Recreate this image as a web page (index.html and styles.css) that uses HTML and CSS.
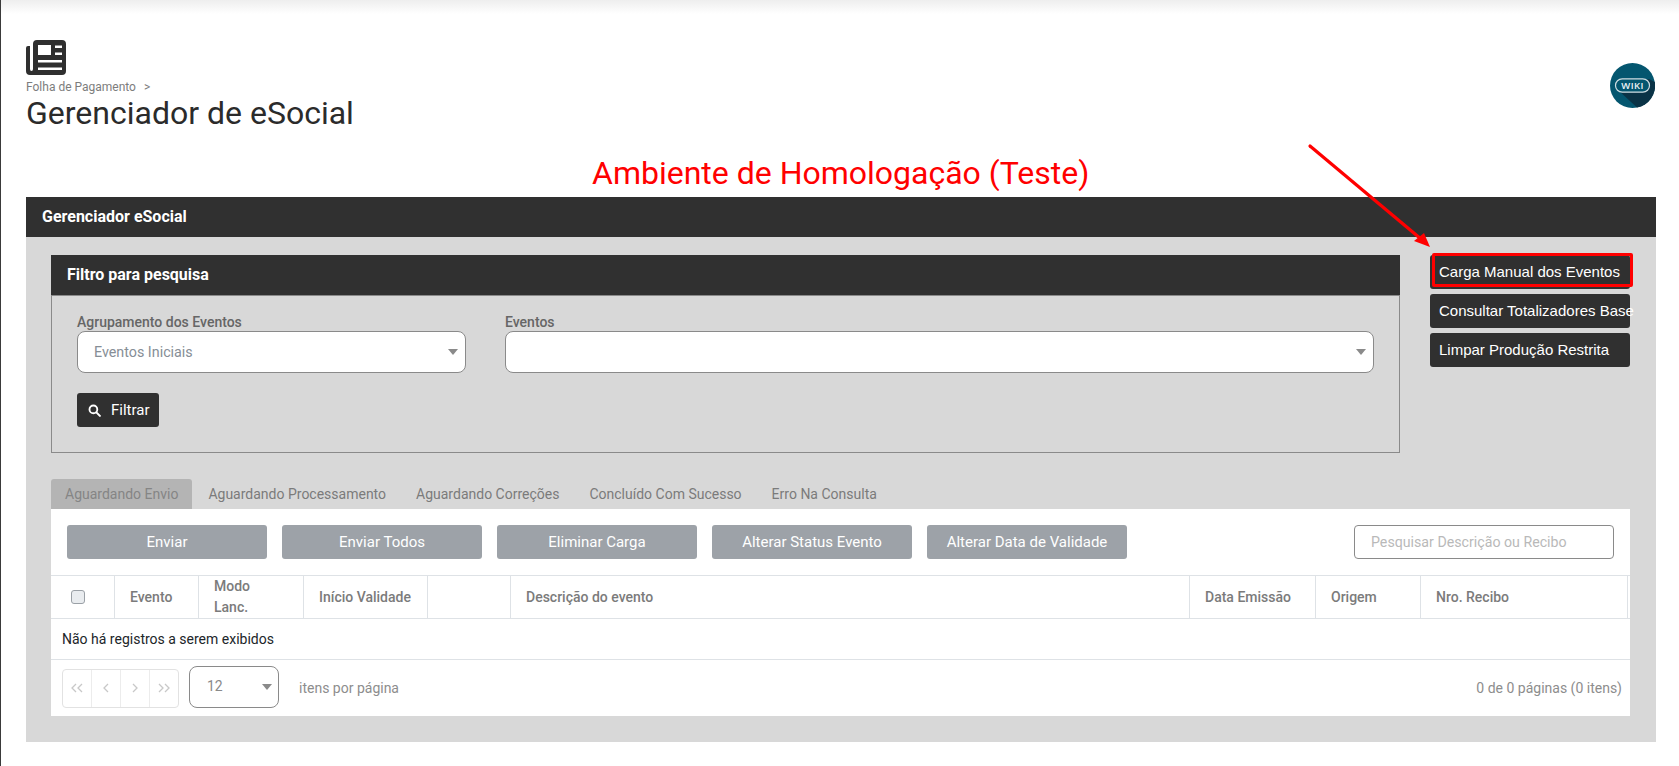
FILE: index.html
```html
<!DOCTYPE html>
<html lang="pt-BR">
<head>
<meta charset="utf-8">
<title>Gerenciador de eSocial</title>
<link rel="stylesheet" href="styles.css">
</head>
<body>
<div class="page">
  <div class="topshade"></div>
  <header class="pagehead">
    <div class="pagehead-left">
      <svg class="news" viewBox="0 0 40 35" width="40" height="35" aria-hidden="true">
        <path fill-rule="evenodd" fill="#2f2f2f" d="M11 0H36Q40 0 40 4V31Q40 35 36 35H4Q0 35 0 31V8Q0 6 2 6H4V29Q4 31 5.500 31Q7 31 7 29V4Q7 0 11 0ZM12 5V15H25V5ZM29 5.500V8H36V5.500ZM29 12.500V15H36V12.500ZM12 20V22.500H36V20ZM12 27.500V30H36V27.500Z"/>
      </svg>
      <div class="crumb">Folha de Pagamento <span class="crumb-sep">&gt;</span></div>
      <h1 class="title">Gerenciador de eSocial</h1>
    </div>
    <svg class="wiki" viewBox="0 0 45 45" width="45" height="45" aria-hidden="true">
      <circle cx="22.500" cy="22.500" r="22.500" fill="#04566f"/>
      <path d="M8 27L27 44.600A22.500 22.500 0 0 0 44.900 19L39 16Z" fill="#0a3346"/>
      <rect x="5.500" y="15.800" width="34" height="13.400" rx="6.700" fill="#04566f" stroke="#cfdde2" stroke-width="1.200"/>
      <text x="22.500" y="26" text-anchor="middle" class="wiki-text">WIKI</text>
    </svg>
  </header>
  <div class="notice">Ambiente de Homologação (Teste)</div>

  <section class="panel">
    <div class="panel-head">Gerenciador eSocial</div>
    <div class="panel-body">
      <div class="toprow">
        <div class="filter">
          <div class="filter-head">Filtro para pesquisa</div>
          <div class="filter-body">
            <div class="fields">
              <div class="field field-a">
                <label class="label">Agrupamento dos Eventos</label>
                <div class="select"><span>Eventos Iniciais</span><i class="caret"></i></div>
              </div>
              <div class="field field-b">
                <label class="label">Eventos</label>
                <div class="select"><span></span><i class="caret"></i></div>
              </div>
            </div>
            <button class="btn-filter">
              <svg viewBox="0 0 14 14" width="13" height="13" aria-hidden="true"><circle cx="5.800" cy="5.800" r="4.200" fill="none" stroke="#fff" stroke-width="2"/><path d="M9 9L12.800 12.800" stroke="#fff" stroke-width="2.200" stroke-linecap="round"/></svg>
              Filtrar
            </button>
          </div>
        </div>
        <div class="side">
          <button class="btn-side">Carga Manual dos Eventos</button>
          <button class="btn-side">Consultar Totalizadores Base</button>
          <button class="btn-side">Limpar Produção Restrita</button>
        </div>
      </div>

      <nav class="tabs">
        <span class="tab tab-on">Aguardando Envio</span>
        <span class="tab">Aguardando Processamento</span>
        <span class="tab">Aguardando Correções</span>
        <span class="tab">Concluído Com Sucesso</span>
        <span class="tab">Erro Na Consulta</span>
      </nav>

      <div class="grid">
        <div class="toolbar">
          <button class="btn-grey">Enviar</button>
          <button class="btn-grey">Enviar Todos</button>
          <button class="btn-grey">Eliminar Carga</button>
          <button class="btn-grey">Alterar Status Evento</button>
          <button class="btn-grey">Alterar Data de Validade</button>
          <div class="search">Pesquisar Descrição ou Recibo</div>
        </div>
        <div class="thead">
          <div class="th th-check"><span class="check"></span></div>
          <div class="th">Evento</div>
          <div class="th th-two">Modo Lanc.</div>
          <div class="th">Início Validade</div>
          <div class="th"></div>
          <div class="th">Descrição do evento</div>
          <div class="th">Data Emissão</div>
          <div class="th">Origem</div>
          <div class="th">Nro. Recibo</div>
        </div>
        <div class="empty">Não há registros a serem exibidos</div>
        <div class="pagerbar">
          <div class="pager">
            <span class="pg"><svg viewBox="0 0 12 10" width="12" height="10" aria-hidden="true"><path d="M5 1L1 5L5 9M11 1L7 5L11 9" class="chev"/></svg></span>
            <span class="pg"><svg viewBox="0 0 6 10" width="6" height="10" aria-hidden="true"><path d="M5 1L1 5L5 9" class="chev"/></svg></span>
            <span class="pg"><svg viewBox="0 0 6 10" width="6" height="10" aria-hidden="true"><path d="M1 1L5 5L1 9" class="chev"/></svg></span>
            <span class="pg"><svg viewBox="0 0 12 10" width="12" height="10" aria-hidden="true"><path d="M1 1L5 5L1 9M7 1L11 5L7 9" class="chev"/></svg></span>
          </div>
          <div class="pagesize"><span>12</span><i class="caret"></i></div>
          <span class="perpage">itens por página</span>
          <span class="count">0 de 0 páginas (0 itens)</span>
        </div>
      </div>
    </div>
  </section>

  <svg class="arrow" viewBox="0 0 140 120" width="140" height="120" aria-hidden="true">
    <path d="M11 6L122 99" stroke="#f00" stroke-width="3.200" stroke-linecap="round"/>
    <path d="M131 107L115 101L125 93Z" fill="#f00"/>
  </svg>
  <div class="redbox"></div>
</div>
</body>
</html>
```
FILE: styles.css
```css
* { box-sizing: border-box; }
html, body { margin: 0; height: 100%; background: #fff; }
body { font-family: Roboto, "Liberation Sans", sans-serif; color: #212529; overflow: hidden; }
button { font-family: inherit; cursor: default; }

.page { position: relative; height: 766px; border-left: 1px solid #3a3a3a; }
.topshade { height: 14px; background: linear-gradient(#eeeeee, #ffffff); }

.pagehead { display: flex; justify-content: space-between; align-items: flex-start; padding: 26px 24px 0 25px; height: 183px; }
.pagehead-left { display: flex; flex-direction: column; }
.news { display: block; }
.crumb { font-size: 12px; line-height: 14px; color: #7d7d7d; margin-top: 5px; }
.crumb-sep { margin-left: 5px; }
.title { margin: 0; font-size: 32px; font-weight: 400; line-height: 38px; color: #2b2b2b; }
.wiki { margin-top: 23px; }
.wiki-text { font-family: "Open Sans", sans-serif; font-size: 9.500px; font-weight: 600; fill: #eef4f6; letter-spacing: 0.400px; }

.notice { position: absolute; left: 591px; top: 154px; font-size: 32px; line-height: 38px; color: #f00; white-space: nowrap; }

.panel { margin: 0 23px 0 25px; height: 545px; background: #d8d8d8; }
.panel-head { height: 40px; background: #303030; color: #fff; font-size: 16px; font-weight: 700; line-height: 39px; padding-left: 16px; }
.panel-body { padding: 18px 25px 0 25px; }

.toprow { display: flex; gap: 30px; align-items: flex-start; }
.filter { width: 1349px; border: 1px solid #8a8a8a; border-top: 0; }
.filter-head { height: 41px; margin: 0 -1px; background: #303030; border-bottom: 1px solid #8a8a8a; color: #fff; font-size: 16px; font-weight: 700; line-height: 39px; padding-left: 16px; }
.filter-body { padding: 17px 25px 25px; height: 156px; }
.fields { display: flex; gap: 39px; }
.field-a { width: 389px; }
.field-b { width: 869px; }
.label { display: block; font-size: 14px; font-weight: 500; line-height: 18px; color: #666; }
.select { position: relative; height: 42px; background: #fff; border: 1px solid #8a8a8a; border-radius: 8px; font-size: 14.300px; line-height: 40px; color: #868e96; padding-left: 16px; }
.caret { position: absolute; right: 7px; top: 17px; width: 0; height: 0; border-left: 5.500px solid transparent; border-right: 5.500px solid transparent; border-top: 6px solid #8a8a8a; }
.btn-filter { display: flex; align-items: center; gap: 10px; margin-top: 20px; width: 82px; height: 34px; padding: 0 0 0 11px; background: #303030; border: 0; border-radius: 3px; color: #fff; font-size: 15px; }

.side { display: flex; flex-direction: column; gap: 5px; width: 200px; }
.btn-side { height: 34px; width: 200px; padding: 0 0 2px 9px; background: #303030; border: 0; border-radius: 3px; color: #fff; font-family: "Liberation Sans", Arial, sans-serif; font-size: 15px; text-align: left; white-space: nowrap; overflow: visible; }

.tabs { display: flex; gap: 2px; height: 30px; margin-top: 26px; font-size: 14px; color: #7b7b7b; }
.tab { padding: 0 14px; line-height: 30px; white-space: nowrap; }
.tab-on { background: #b4b4b4; border-radius: 3px 3px 0 0; color: #858585; }

.grid { width: 1579px; height: 207px; background: #fff; }
.toolbar { display: flex; align-items: center; gap: 15px; height: 66px; padding: 0 16px 0 16px; }
.btn-grey { width: 200px; height: 34px; background: #9da2a8; border: 0; border-radius: 3px; color: #fff; font-size: 15px; }
.search { margin-left: auto; width: 260px; height: 34px; border: 1px solid #8a8a8a; border-radius: 4px; font-size: 14.200px; line-height: 32px; color: #b9b9b9; padding-left: 16px; }

.thead { display: grid; grid-template-columns: 64px 84px 105px 124px 83px 679px 126px 105px 207px 1fr; height: 44px; border-top: 1px solid #dee2e6; border-bottom: 1px solid #dee2e6; font-size: 14px; font-weight: 500; color: #7b7b7b; }
.th { display: flex; align-items: center; padding-left: 15px; border-right: 1px solid #dee2e6; }
.th-check { padding-left: 20px; }
.th-two { line-height: 21px; padding-right: 30px; }
.check { width: 14px; height: 14px; background: #e9ecef; border: 1px solid #9aa0a6; border-radius: 3px; }

.empty { height: 41px; border-bottom: 1px solid #dee2e6; font-size: 14px; line-height: 41px; padding-left: 11px; color: #212529; }

.pagerbar { display: flex; align-items: center; height: 56px; padding: 0 8px 0 11px; font-size: 14px; color: #8d8d8d; }
.pager { display: flex; height: 39px; width: 117px; border: 1px solid #e2e2e2; border-radius: 4px; }
.pg { display: flex; align-items: center; justify-content: center; flex: 1; border-right: 1px solid #ececec; }
.pg:last-child { border-right: 0; }
.chev { fill: none; stroke: #c8c8c8; stroke-width: 1.300; }
.pagesize { position: relative; width: 90px; height: 42px; margin: 0 0 3px 10px; border: 1px solid #8a8a8a; border-radius: 8px; line-height: 39px; padding-left: 17px; color: #8a8a8a; }
.pagesize .caret { right: 6px; top: 17px; }
.perpage { margin-left: 20px; }
.count { margin-left: auto; }

.arrow { position: absolute; left: 1298px; top: 140px; }
.redbox { position: absolute; left: 1431px; top: 253px; width: 201px; height: 34px; border: 3px solid #f00; border-radius: 2px; }
```
